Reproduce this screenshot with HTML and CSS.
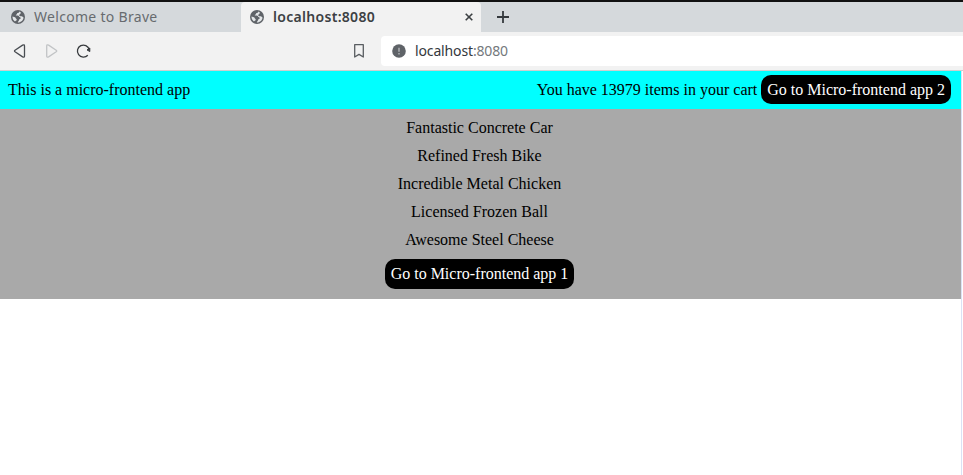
FILE: index.html
```
<!DOCTYPE html>
<html lang="en">
<head>
<meta charset="utf-8">
<title>localhost:8080</title>
<link rel="stylesheet" href="styles.css">
</head>
<body>
<svg class="defs" aria-hidden="true">
  <symbol id="globe" viewBox="0 0 14 14">
    <circle cx="7" cy="7" r="7" fill="#5f6368"/>
    <path d="M8.3 1.5C8.2 2.9 7.4 3.1 6.1 3.2C6 4.4 5 4.6 4.7 5.5C6.5 5.4 8 5.5 8.1 6.7C8.6 7.4 9.8 7.1 9.8 8.2C9.5 9.1 8.1 8.9 8 10.2C7.9 11.1 6.9 11.5 6.8 12.4C10 12.5 12.5 10 12.5 7.4C11.8 7.2 11.5 6.5 10.8 6.3C9.5 6.4 8.2 6.1 8.2 4.9C8.5 4 9.8 4.2 9.9 2.4ZM1.5 6.5C1.4 8.6 2.4 10.5 4 11.5C4.3 10.7 5.8 10.9 5.8 9.8C5.7 8.7 4.8 8.8 4.6 7.7C3.9 6.8 2.5 7 1.5 6.5Z" fill="#e3e6e8"/>
  </symbol>
</svg>
<header class="browser">
  <div class="tabs">
    <div class="tab"><svg class="globe"><use href="#globe"/></svg><span class="title">Welcome to Brave</span></div>
    <div class="tab active"><svg class="globe"><use href="#globe"/></svg><span class="title">localhost:8080</span>
      <svg class="close" viewBox="0 0 8 8"><path d="M.7.7 7.3 7.3M7.3.7.7 7.3" stroke="#3c4043" stroke-width="1.6"/></svg>
    </div>
    <svg class="plus" viewBox="0 0 12 12"><path d="M6 0V12M0 6H12" stroke="#35393d" stroke-width="1.8"/></svg>
  </div>
  <div class="toolbar">
    <svg class="nav" viewBox="0 0 96 38" fill="none" stroke-width="1.3" stroke-linejoin="round">
      <path d="M15 18.2 22.6 13.1Q24.5 12.3 24.5 14V24Q24.5 25.7 22.6 24.9L15 19.8Q14 19 15 18.2Z" stroke="#494d52"/>
      <path d="M56.2 18.2 48.6 13.1Q46.7 12.3 46.7 14V24Q46.7 25.7 48.6 24.9L56.2 19.8Q57.2 19 56.2 18.2Z" stroke="#c2c4c6"/>
      <path d="M87.8 23.2A6 6 0 1 1 89.2 17.5" stroke="#383b3e" stroke-width="1.3"/>
      <path d="M89.8 16V19.6L87 17.9Z" fill="#383b3e" stroke="#383b3e" stroke-width="1"/>
    </svg>
    <svg class="bookmark" viewBox="0 0 10 14"><path d="M.7.7H9.3V13L5 10.4.7 13Z" fill="none" stroke="#595d61" stroke-width="1.3" stroke-linejoin="round"/></svg>
    <div class="address">
      <svg class="info" viewBox="0 0 14 14"><circle cx="7" cy="7" r="6.8" fill="#5f6368"/><path d="M7 3.7V7.8M7 8.9V10.4" stroke="#b4b7ba" stroke-width="1.4"/></svg>
      <span class="url">localhost<span class="port">:8080</span></span>
    </div>
  </div>
</header>
<main class="page">
  <div class="topbar">
    <span>This is a micro-frontend app</span>
    <div class="cart">You have 13979 items in your cart <button>Go to Micro-frontend app 2</button></div>
  </div>
  <div class="products">
    <div class="item">Fantastic Concrete Car</div>
    <div class="item">Refined Fresh Bike</div>
    <div class="item">Incredible Metal Chicken</div>
    <div class="item">Licensed Frozen Ball</div>
    <div class="item">Awesome Steel Cheese</div>
    <button>Go to Micro-frontend app 1</button>
  </div>
</main>
</body>
</html>
```
FILE: styles.css
```
* { box-sizing: border-box; }
body {
  margin: 0;
  height: 475px;
  overflow: hidden;
  display: flex;
  flex-direction: column;
  background: #fff;
  font: 16px "Liberation Serif", serif;
  color: #000;
}
svg { display: block; flex: none; }
.defs { display: none; }
.browser { font-family: "Noto Sans", sans-serif; flex: none; }
.tabs {
  height: 32px;
  border-top: 2px solid #111;
  background: #d5d9dc;
  display: flex;
  align-items: center;
}
.tab {
  width: 241px;
  height: 30px;
  padding: 0 8px 0 11px;
  display: flex;
  align-items: center;
  font-size: 14px;
  color: #676b6f;
}
.tab.active {
  width: 240px;
  padding-left: 9px;
  border-radius: 4px 4px 0 0;
  background: #f2f2f2;
  color: #3c4043;
  font-weight: 600;
}
.globe { width: 14px; height: 14px; margin-right: 9px; }
.title { white-space: nowrap; line-height: 30px; letter-spacing: .3px; }
.close { width: 8px; height: 8px; margin-left: auto; }
.plus { width: 12px; height: 12px; margin-left: 16px; }
.toolbar {
  height: 39px;
  background: #f2f2f2;
  border-bottom: 1px solid #cfcfcf;
  display: flex;
  align-items: center;
}
.nav { width: 96px; height: 38px; }
.bookmark { width: 10px; height: 14px; margin-left: 258px; }
.address {
  flex: 1;
  height: 30px;
  margin-left: 17px;
  padding-left: 11px;
  background: #fff;
  border-radius: 4px 0 0 4px;
  display: flex;
  align-items: center;
}
.info { width: 14px; height: 14px; margin-right: 9px; }
.url { font-size: 14px; line-height: 30px; letter-spacing: -.14px; color: #34383c; }
.port { color: #74787c; }
.page { flex: 1; margin-right: 1px; border-right: 1px solid #dbe1f5; }
.topbar {
  height: 38px;
  padding: 0 10px 0 8px;
  background: #0ff;
  display: flex;
  justify-content: space-between;
  align-items: center;
}
button {
  height: 30px;
  padding: 0 6px;
  border: 0;
  border-radius: 10px;
  background: #000;
  color: #fff;
  font: inherit;
}
.cart { margin-bottom: 1px; }
.cart button { height: 29px; padding-top: 1px; }
.products {
  height: 190px;
  padding: 5px 2px 0 0;
  background: #a9a9a9;
  text-align: center;
}
.item { height: 28px; line-height: 28px; }
.products button { margin-top: 5px; }
```
